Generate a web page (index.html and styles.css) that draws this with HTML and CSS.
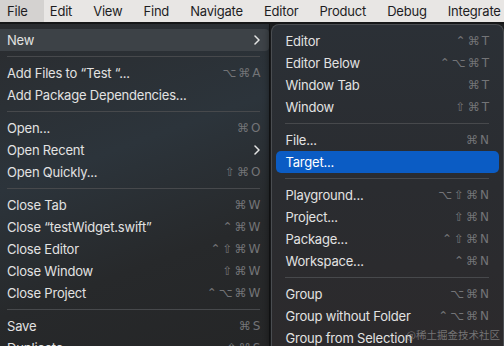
FILE: index.html
```html
<!DOCTYPE html>
<html lang="en">
<head>
    <meta charset="UTF-8">
    <link rel="stylesheet" href="styles.css">
    <title>Xcode File Menu</title>
</head>
<body>
    <header class="menubar">
        <span class="mi on">File</span>
        <span class="mi">Edit</span>
        <span class="mi">View</span>
        <span class="mi">Find</span>
        <span class="mi">Navigate</span>
        <span class="mi">Editor</span>
        <span class="mi">Product</span>
        <span class="mi">Debug</span>
        <span class="mi">Integrate</span>
    </header>

    <main class="stage">
        <!-- File menu -->
        <div class="menu">
            <div class="item hover"><span>New</span>
                <svg class="chev" width="6" height="10" viewBox="0 0 6 10"><polyline points="1,1 5,5 1,9" fill="none" stroke="#e4e4e4" stroke-width="1.5" stroke-linecap="round" stroke-linejoin="round"/></svg>
            </div>
            <div class="sep"></div>
            <div class="item"><span>Add Files to “Test “...</span><span class="key">⌥⌘A</span></div>
            <div class="item"><span>Add Package Dependencies...</span></div>
            <div class="sep"></div>
            <div class="item"><span>Open...</span><span class="key">⌘O</span></div>
            <div class="item"><span>Open Recent</span>
                <svg class="chev" width="6" height="10" viewBox="0 0 6 10"><polyline points="1,1 5,5 1,9" fill="none" stroke="#e4e4e4" stroke-width="1.5" stroke-linecap="round" stroke-linejoin="round"/></svg>
            </div>
            <div class="item"><span>Open Quickly...</span><span class="key">⇧⌘O</span></div>
            <div class="sep"></div>
            <div class="item"><span>Close Tab</span><span class="key">⌘W</span></div>
            <div class="item"><span>Close “testWidget.swift”</span><span class="key">⌃⌘W</span></div>
            <div class="item"><span>Close Editor</span><span class="key">⌃⇧⌘W</span></div>
            <div class="item"><span>Close Window</span><span class="key">⇧⌘W</span></div>
            <div class="item"><span>Close Project</span><span class="key">⌃⌥⌘W</span></div>
            <div class="sep"></div>
            <div class="item"><span>Save</span><span class="key">⌘S</span></div>
            <div class="item"><span>Duplicate...</span><span class="key">⇧⌘S</span></div>
        </div>

        <!-- New submenu -->
        <div class="submenu">
            <div class="item"><span>Editor</span><span class="key">⌃⌘T</span></div>
            <div class="item"><span>Editor Below</span><span class="key">⌃⌥⌘T</span></div>
            <div class="item"><span>Window Tab</span><span class="key">⌘T</span></div>
            <div class="item"><span>Window</span><span class="key">⇧⌘T</span></div>
            <div class="sep"></div>
            <div class="item"><span>File...</span><span class="key">⌘N</span></div>
            <div class="item selected"><span>Target...</span></div>
            <div class="sep"></div>
            <div class="item"><span>Playground...</span><span class="key">⌥⇧⌘N</span></div>
            <div class="item"><span>Project...</span><span class="key">⇧⌘N</span></div>
            <div class="item"><span>Package...</span><span class="key">⌃⇧⌘N</span></div>
            <div class="item"><span>Workspace...</span><span class="key">⌃⌘N</span></div>
            <div class="sep"></div>
            <div class="item"><span>Group</span><span class="key">⌥⌘N</span></div>
            <div class="item"><span>Group without Folder</span><span class="key">⌃⌥⌘N</span></div>
            <div class="item"><span>Group from Selection</span></div>
        </div>

        <div class="watermark">@稀土掘金技术社区</div>
    </main>
</body>
</html>
```

FILE: styles.css
```css
body {
    margin: 0;
    width: 504px;
    height: 346px;
    overflow: hidden;
    font-family: 'Inter', 'Liberation Sans', sans-serif;
    font-size: 13px;
    letter-spacing: -0.2px;
    background: #202224;
}

.menubar {
    display: flex;
    height: 22px;
    align-items: center;
    background: #e8e6e4;
    color: #1d1d1f;
    border-bottom: 2px solid #161718;
    white-space: nowrap;
}

.mi {
    padding: 0 10.5px;
    line-height: 22px;
}

.mi:first-child {
    padding-left: 7px;
}

.mi.on {
    background: #d4d2d0;
    padding-right: 16px;
}

.mi.on + .mi {
    padding-left: 6px;
}

.stage {
    position: relative;
    display: flex;
    height: 322px;
    overflow: hidden;
}

.menu {
    width: 270px;
    padding-top: 5px;
    background: linear-gradient(160deg, #2a2c2f 0%, #2c343b 40%, #27292b 70%, #252627 100%);
    border-right: 1px solid #141516;
    color: #e2e2e2;
}

.submenu {
    width: 223px;
    margin-left: 1px;
    padding: 5px 4px;
    background: linear-gradient(180deg, #2b3036 0%, #2a2c30 50%, #2c2a2c 100%);
    border: 1px solid #4a4d51;
    border-bottom: none;
    border-radius: 8px 8px 0 0;
    color: #e2e2e2;
    box-shadow: -2px 0 6px rgba(0, 0, 0, 0.4);
}

.item {
    display: flex;
    justify-content: space-between;
    align-items: center;
    height: 22px;
    padding: 0 9px 0 7px;
    white-space: nowrap;
}

.submenu .item {
    padding: 0 10px 0 9px;
    border-radius: 5px;
}

.item.hover {
    background: #3d4247;
    border-radius: 0 4px 4px 0;
    padding-right: 9px;
}

.item.selected {
    background: #0b5cc4;
    color: #ffffff;
}

.key {
    color: #737477;
    letter-spacing: 2px;
    margin-right: -2px;
    font-family: 'DejaVu Sans', 'Inter', sans-serif;
    font-size: 12px;
}

.sep {
    height: 1px;
    margin: 5px 9px 5px 7px;
    background: #47494c;
}

.submenu .sep {
    margin: 5px 10px 5px 9px;
}

.watermark {
    position: absolute;
    left: 406px;
    top: 303px;
    white-space: nowrap;
    letter-spacing: 0;
    color: rgba(190, 190, 190, 0.5);
    font-family: 'Noto Sans CJK SC', sans-serif;
    font-size: 10.5px;
}
```
